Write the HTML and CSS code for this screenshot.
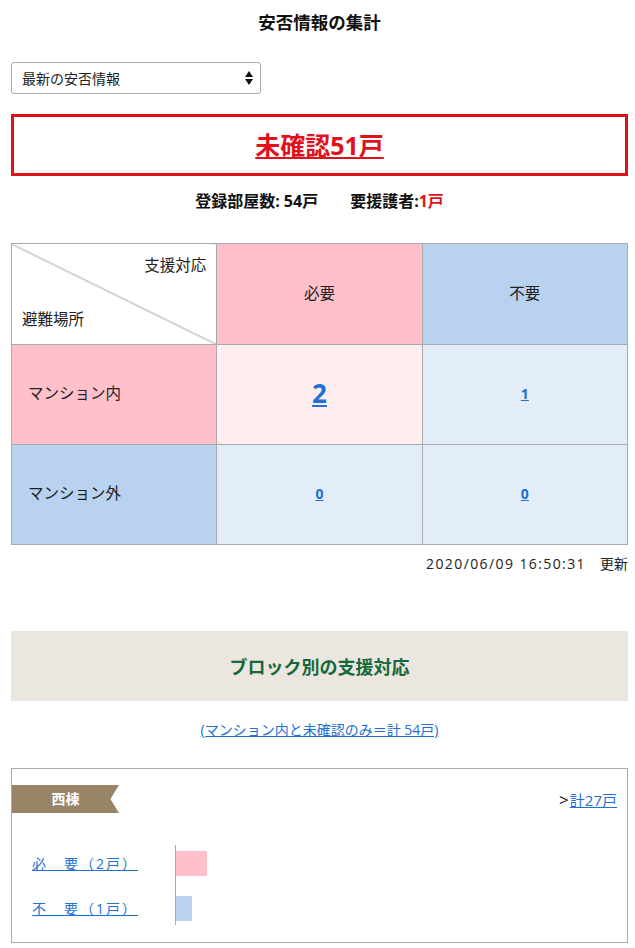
FILE: index.html
```html
<!DOCTYPE html>
<html lang="ja">
<head>
<meta charset="utf-8">
<title>安否情報の集計</title>
<link rel="stylesheet" href="styles.css">
</head>
<body>
<div class="page">
  <h1 class="title">安否情報の集計</h1>

  <div class="select">
    <span class="select-text">最新の安否情報</span>
    <svg class="select-arrows" width="8" height="16" viewBox="0 0 8 16"><path d="M4 1 L8 7 H0 Z M0 9 H8 L4 15 Z" fill="#111"/></svg>
  </div>

  <div class="alert"><a href="#" class="alert-link">未確認51戸</a></div>

  <p class="summary">登録部屋数: 54戸　　要援護者:<span class="red">1戸</span></p>

  <table class="matrix">
    <tr class="row-head">
      <th class="corner">
        <div class="corner-top">支援対応</div>
        <div class="corner-bottom">避難場所</div>
      </th>
      <th class="pink">必要</th>
      <th class="blue">不要</th>
    </tr>
    <tr>
      <th class="rowlabel pink">マンション内</th>
      <td class="lpink"><a href="#" class="big">2</a></td>
      <td class="lblue"><a href="#" class="num">1</a></td>
    </tr>
    <tr>
      <th class="rowlabel blue">マンション外</th>
      <td class="lblue"><a href="#" class="num">0</a></td>
      <td class="lblue"><a href="#" class="num">0</a></td>
    </tr>
  </table>

  <p class="stamp"><span class="date">2020/06/09 16:50:31</span>　更新</p>

  <h2 class="section">ブロック別の支援対応</h2>

  <p class="note"><a href="#">(マンション内と未確認のみ＝計 54戸)</a></p>

  <div class="card">
    <div class="card-head">
      <div class="ribbon">西棟</div>
      <div class="total"><span class="gt">&gt;</span><a href="#">計27戸</a></div>
    </div>
    <div class="chart">
      <div class="labels">
        <a href="#" class="lab">必　要（2戸）</a>
        <a href="#" class="lab">不　要（1戸）</a>
      </div>
      <div class="bars">
        <div class="bar bar-pink" style="width:31px"></div>
        <div class="bar bar-blue" style="width:16px"></div>
      </div>
    </div>
  </div>
</div>
</body>
</html>
```

FILE: styles.css
```css
* { box-sizing: border-box; }
html, body { margin: 0; padding: 0; background: #fff; }
body {
  font-family: "Open Sans", "Noto Sans CJK JP", sans-serif;
  color: #222;
  font-size: 14px;
}
.page { padding: 0 7px 0 11px; }
a { color: #2170d4; }

.title {
  margin: 0;
  padding-top: 10px;
  height: 62px;
  text-align: center;
  font-size: 17.5px;
  line-height: 24px;
  font-weight: bold;
  color: #111;
}

.select {
  width: 250px;
  height: 32px;
  border: 1px solid #aaa;
  border-radius: 3px;
  display: flex;
  align-items: center;
  justify-content: space-between;
  padding: 0 7px 0 10px;
  font-size: 14px;
  color: #222;
}

.alert {
  margin-top: 20px;
  height: 62px;
  border: 3px solid #e0111b;
  display: flex;
  align-items: center;
  justify-content: center;
}
.alert-link {
  color: #e0111b;
  font-size: 25px;
  font-weight: bold;
  line-height: 30px;
}

.summary {
  margin: 13px 0 0;
  text-align: center;
  font-weight: bold;
  font-size: 16px;
  line-height: 24px;
  color: #111;
}
.red { color: #e0111b; }

.matrix {
  margin-top: 30px;
  width: 617px;
  border-collapse: collapse;
  table-layout: fixed;
}
.matrix th, .matrix td {
  border: 1px solid #aaa;
  text-align: center;
  font-weight: normal;
  font-size: 15.5px;
  color: #222;
  padding: 0 0 4px;
}
.matrix tr { height: 100px; }
.matrix .row-head { height: 101px; }
.matrix .corner {
  background: linear-gradient(to top right, transparent calc(50% - 1px), #a8a8a8 50%, transparent calc(50% + 1px));
  vertical-align: top;
  padding: 0;
}
.corner-top {
  text-align: right;
  padding: 11px 10px 0 0;
  line-height: 20px;
}
.corner-bottom {
  text-align: left;
  padding: 34px 0 0 10px;
  line-height: 20px;
}
.pink { background: #ffc0cb; }
.blue { background: #b8d2ef; }
.lpink { background: #ffedf0; }
.lblue { background: #e2edf8; }
.matrix .rowlabel { text-align: left; padding-left: 16px; }
.big { font-size: 26px; font-weight: bold; }
.num { font-size: 14px; font-weight: bold; }

.stamp {
  margin: 8px 0 0;
  text-align: right;
  line-height: 22px;
  font-size: 14px;
  color: #222;
}
.date { letter-spacing: 1.4px; }

.section {
  margin: 56px 0 0;
  height: 70px;
  background: #ebe6e0;
  color: #15693a;
  font-size: 18px;
  font-weight: bold;
  display: flex;
  align-items: center;
  justify-content: center;
}

.note {
  margin: 18px 0 0;
  text-align: center;
  font-size: 14px;
  line-height: 22px;
}

.card {
  margin-top: 27px;
  border: 1px solid #aaa;
  height: 175px;
}
.card-head {
  margin-top: 16px;
  display: flex;
  justify-content: space-between;
  align-items: center;
  padding-right: 10px;
}
.ribbon {
  width: 107px;
  height: 28px;
  background: #9a8468;
  color: #fff;
  font-weight: bold;
  font-size: 14px;
  line-height: 28px;
  text-align: center;
  clip-path: polygon(0 0, 100% 0, 92% 50%, 100% 100%, 0 100%);
}
.total { font-size: 15px; color: #111; }
.gt { font-size: 17px; margin-right: 1px; }

.chart {
  display: flex;
  margin-top: 32px;
  padding-left: 20px;
}
.labels {
  width: 143px;
  display: flex;
  flex-direction: column;
  gap: 21px;
  padding-top: 7px;
}
.lab {
  font-size: 14px;
  letter-spacing: 2px;
  line-height: 24px;
  align-self: flex-start;
}
.bars {
  border-left: 1px solid #aaa;
  height: 80px;
  display: flex;
  flex-direction: column;
  gap: 20px;
  padding-top: 6px;
}
.bar { height: 25px; }
.bar-pink { background: #ffc0cb; }
.bar-blue { background: #b8d2ef; }
```
